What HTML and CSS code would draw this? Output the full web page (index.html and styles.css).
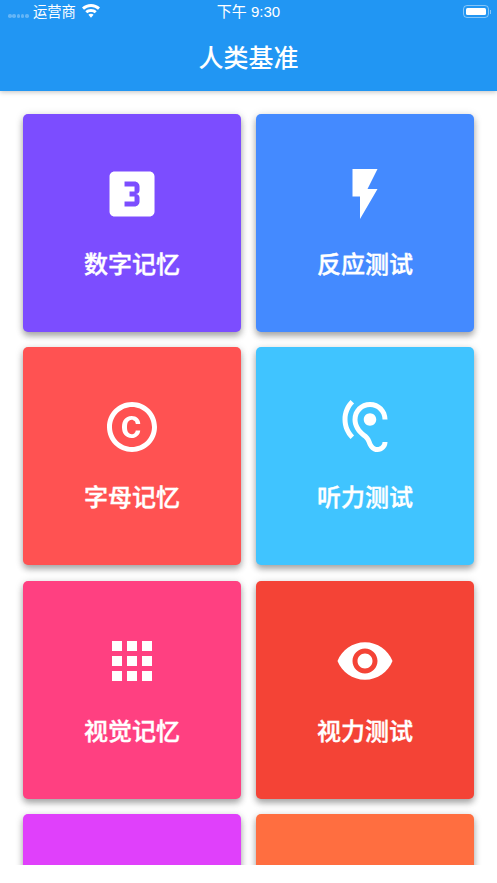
FILE: index.html
```html
<!DOCTYPE html>
<html lang="zh-CN">
<head>
<meta charset="utf-8">
<title>人类基准</title>
<link rel="stylesheet" href="styles.css">
</head>
<body>
<div class="app">
  <header class="appbar">
    <div class="status">
      <div class="status-left">
        <span class="signal"><i></i><i></i><i></i><i></i><i></i></span>
        <span class="carrier">运营商</span>
        <svg class="wifi" viewBox="0 0 18 14"><path d="M9 0C5.500 0 2.400 1.400 0 3.600l2 2.100C3.900 4 6.300 2.900 9 2.900s5.100 1.100 7 2.800l2-2.100C15.600 1.400 12.500 0 9 0z"/><path d="M9 5c-2.200 0-4.200.85-5.700 2.200l2 2.100C6.300 8.400 7.600 7.900 9 7.900s2.700.5 3.700 1.400l2-2.100C13.200 5.850 11.200 5 9 5z"/><path d="M9 9.700c-1 0-1.900.4-2.600 1L9 13.700l2.600-3c-.7-.6-1.600-1-2.600-1z"/></svg>
      </div>
      <span class="clock">下午 9:30</span>
      <div class="battery"><span class="battery-body"><span class="battery-fill"></span></span><span class="battery-tip"></span></div>
    </div>
    <h1 class="title">人类基准</h1>
  </header>
  <main class="scroll">
    <div class="grid">
      <a class="card c-purple">
        <svg class="icon" viewBox="0 0 24 24"><path d="M19.010 3h-14c-1.100 0-2 .9-2 2v14c0 1.100.9 2 2 2h14c1.100 0 2-.9 2-2V5c0-1.100-.9-2-2-2zm-4 7.500c0 .83-.67 1.500-1.500 1.500.83 0 1.500.67 1.500 1.500V15c0 1.110-.9 2-2 2h-4v-2h4v-2h-2v-2h2V9h-4V7h4c1.100 0 2 .89 2 2v1.500z"/></svg>
        <span class="label">数字记忆</span>
      </a>
      <a class="card c-blue">
        <svg class="icon" viewBox="0 0 24 24"><path d="M7 2v11h3v9l7-12h-4l4-8z"/></svg>
        <span class="label">反应测试</span>
      </a>
      <a class="card c-red">
        <svg class="icon" viewBox="0 0 24 24"><path d="M10.080 10.860c.05-.33.16-.62.3-.87s.34-.46.59-.62c.24-.15.54-.22.91-.23.23.01.44.05.63.13.2.09.38.21.52.36s.25.33.34.53.13.42.14.64h1.790c-.02-.47-.11-.9-.28-1.290s-.4-.73-.7-1.010-.66-.5-1.080-.66-.88-.23-1.390-.23c-.65 0-1.220.11-1.700.34s-.88.53-1.200.92-.56.84-.71 1.360S8 11.290 8 11.870v.27c0 .58.08 1.120.23 1.640s.39.97.71 1.350.72.69 1.200.91 1.050.34 1.700.34c.47 0 .91-.08 1.320-.23s.77-.36 1.080-.63.56-.58.74-.94.29-.74.3-1.150h-1.790c-.01.21-.06.4-.15.58s-.21.33-.36.46-.32.23-.52.3c-.19.07-.39.09-.6.1-.36-.01-.66-.08-.89-.23-.25-.16-.45-.37-.59-.62s-.25-.55-.3-.88-.08-.67-.08-1v-.27c0-.35.03-.68.08-1.010zM12 2C6.480 2 2 6.480 2 12s4.480 10 10 10 10-4.480 10-10S17.520 2 12 2zm0 18c-4.410 0-8-3.590-8-8s3.590-8 8-8 8 3.590 8 8-3.590 8-8 8z"/></svg>
        <span class="label">字母记忆</span>
      </a>
      <a class="card c-sky">
        <svg class="icon" viewBox="0 0 24 24"><path d="M17 20c-.29 0-.56-.06-.76-.15-.71-.37-1.210-.88-1.710-2.380-.51-1.560-1.470-2.290-2.390-3-.79-.61-1.610-1.240-2.320-2.530C9.290 10.980 9 9.930 9 9c0-2.800 2.200-5 5-5s5 2.200 5 5h2c0-3.930-3.070-7-7-7S7 5.070 7 9c0 1.260.38 2.650 1.070 3.900.91 1.650 1.980 2.480 2.850 3.150.81.62 1.390 1.070 1.710 2.050.6 1.820 1.370 2.840 2.730 3.550.51.23 1.070.35 1.640.35 2.210 0 4-1.790 4-4h-2c0 1.100-.9 2-2 2zM7.640 2.640L6.220 1.220C4.230 3.210 3 5.960 3 9s1.230 5.790 3.220 7.780l1.410-1.410C6.010 13.740 5 11.490 5 9s1.010-4.740 2.640-6.360zM11.500 9c0 1.380 1.120 2.500 2.500 2.500s2.500-1.120 2.500-2.500-1.120-2.500-2.500-2.500-2.500 1.120-2.500 2.500z"/></svg>
        <span class="label">听力测试</span>
      </a>
      <a class="card c-pink">
        <svg class="icon" viewBox="0 0 24 24"><path d="M4 8h4V4H4v4zm6 12h4v-4h-4v4zm-6 0h4v-4H4v4zm0-6h4v-4H4v4zm6 0h4v-4h-4v4zm6-10v4h4V4h-4zm-6 4h4V4h-4v4zm6 6h4v-4h-4v4zm0 6h4v-4h-4v4z"/></svg>
        <span class="label">视觉记忆</span>
      </a>
      <a class="card c-crimson">
        <svg class="icon" viewBox="0 0 24 24"><path d="M12 4.500C7 4.500 2.730 7.610 1 12c1.730 4.390 6 7.500 11 7.500s9.270-3.110 11-7.500c-1.730-4.390-6-7.500-11-7.500zM12 17c-2.760 0-5-2.240-5-5s2.240-5 5-5 5 2.240 5 5-2.240 5-5 5zm0-8c-1.660 0-3 1.340-3 3s1.340 3 3 3 3-1.340 3-3-1.340-3-3-3z"/></svg>
        <span class="label">视力测试</span>
      </a>
      <a class="card c-magenta"></a>
      <a class="card c-orange"></a>
    </div>
  </main>
</div>
</body>
</html>
```
FILE: styles.css
```css
* { box-sizing: border-box; }
html, body { margin: 0; padding: 0; background: #fff; }
body { font-family: "Noto Sans CJK SC", "Liberation Sans", sans-serif; color: #fff; }
.app { width: 497px; height: 883px; overflow: hidden; background: #fff; }

.appbar {
  position: relative;
  z-index: 2;
  height: 91px;
  background: #2196f3;
  box-shadow: 0 1px 5px rgba(0, 0, 0, .25);
}
.status {
  position: relative;
  display: flex;
  align-items: center;
  justify-content: space-between;
  height: 24px;
  padding: 0 6px 0 8px;
}
.status-left { display: flex; align-items: center; }
.signal { display: flex; gap: .800px; margin-top: 8px; width: 25px; }
.signal i { width: 3.500px; height: 3.500px; border-radius: 50%; background: rgba(255, 255, 255, .3); }
.carrier { font-size: 14.300px; line-height: 24px; margin-top: -2px; }
.wifi { width: 18px; height: 14px; margin: -2px 0 0 6px; fill: #fff; }
.clock {
  position: absolute;
  left: 0;
  right: 0;
  text-align: center;
  font-family: "Liberation Sans", "Noto Sans CJK SC", sans-serif;
  font-size: 15px;
  line-height: 24px;
}
.battery { display: flex; align-items: center; margin-top: -1px; }
.battery-body {
  display: block;
  width: 26px;
  height: 13px;
  padding: 2px;
  border: 1px solid rgba(255, 255, 255, .45);
  border-radius: 4px;
}
.battery-fill { display: block; height: 100%; background: #fff; border-radius: 1.500px; }
.battery-tip { width: 1.500px; height: 4px; background: rgba(255, 255, 255, .45); margin-left: 1px; }

.title {
  margin: 0;
  height: 67px;
  font-size: 25px;
  font-weight: 500;
  line-height: 65px;
  text-align: center;
}

.scroll { height: 774px; overflow: hidden; padding: 23px 23px 0; }
.grid {
  display: grid;
  grid-template-columns: 218px 218px;
  grid-auto-rows: 218px;
  column-gap: 15px;
  row-gap: 15.330px;
}
.card {
  display: flex;
  flex-direction: column;
  align-items: center;
  padding-top: 50px;
  border-radius: 5px;
  box-shadow: 0 4px 6px rgba(0, 0, 0, .3), 0 1px 10px rgba(0, 0, 0, .12);
}
.icon { width: 60px; height: 60px; fill: #fff; display: block; }
.label {
  margin-top: 19px;
  font-size: 24px;
  font-weight: 500;
  line-height: 40px;
  -webkit-text-stroke: .4px #fff;
}

.c-purple { background: #7c4dff; }
.c-blue { background: #448aff; }
.c-red { background: #ff5252; }
.c-sky { background: #40c4ff; }
.c-pink { background: #ff4081; }
.c-crimson { background: #f44336; }
.c-magenta { background: #e040fb; }
.c-orange { background: #ff6e40; }
```
